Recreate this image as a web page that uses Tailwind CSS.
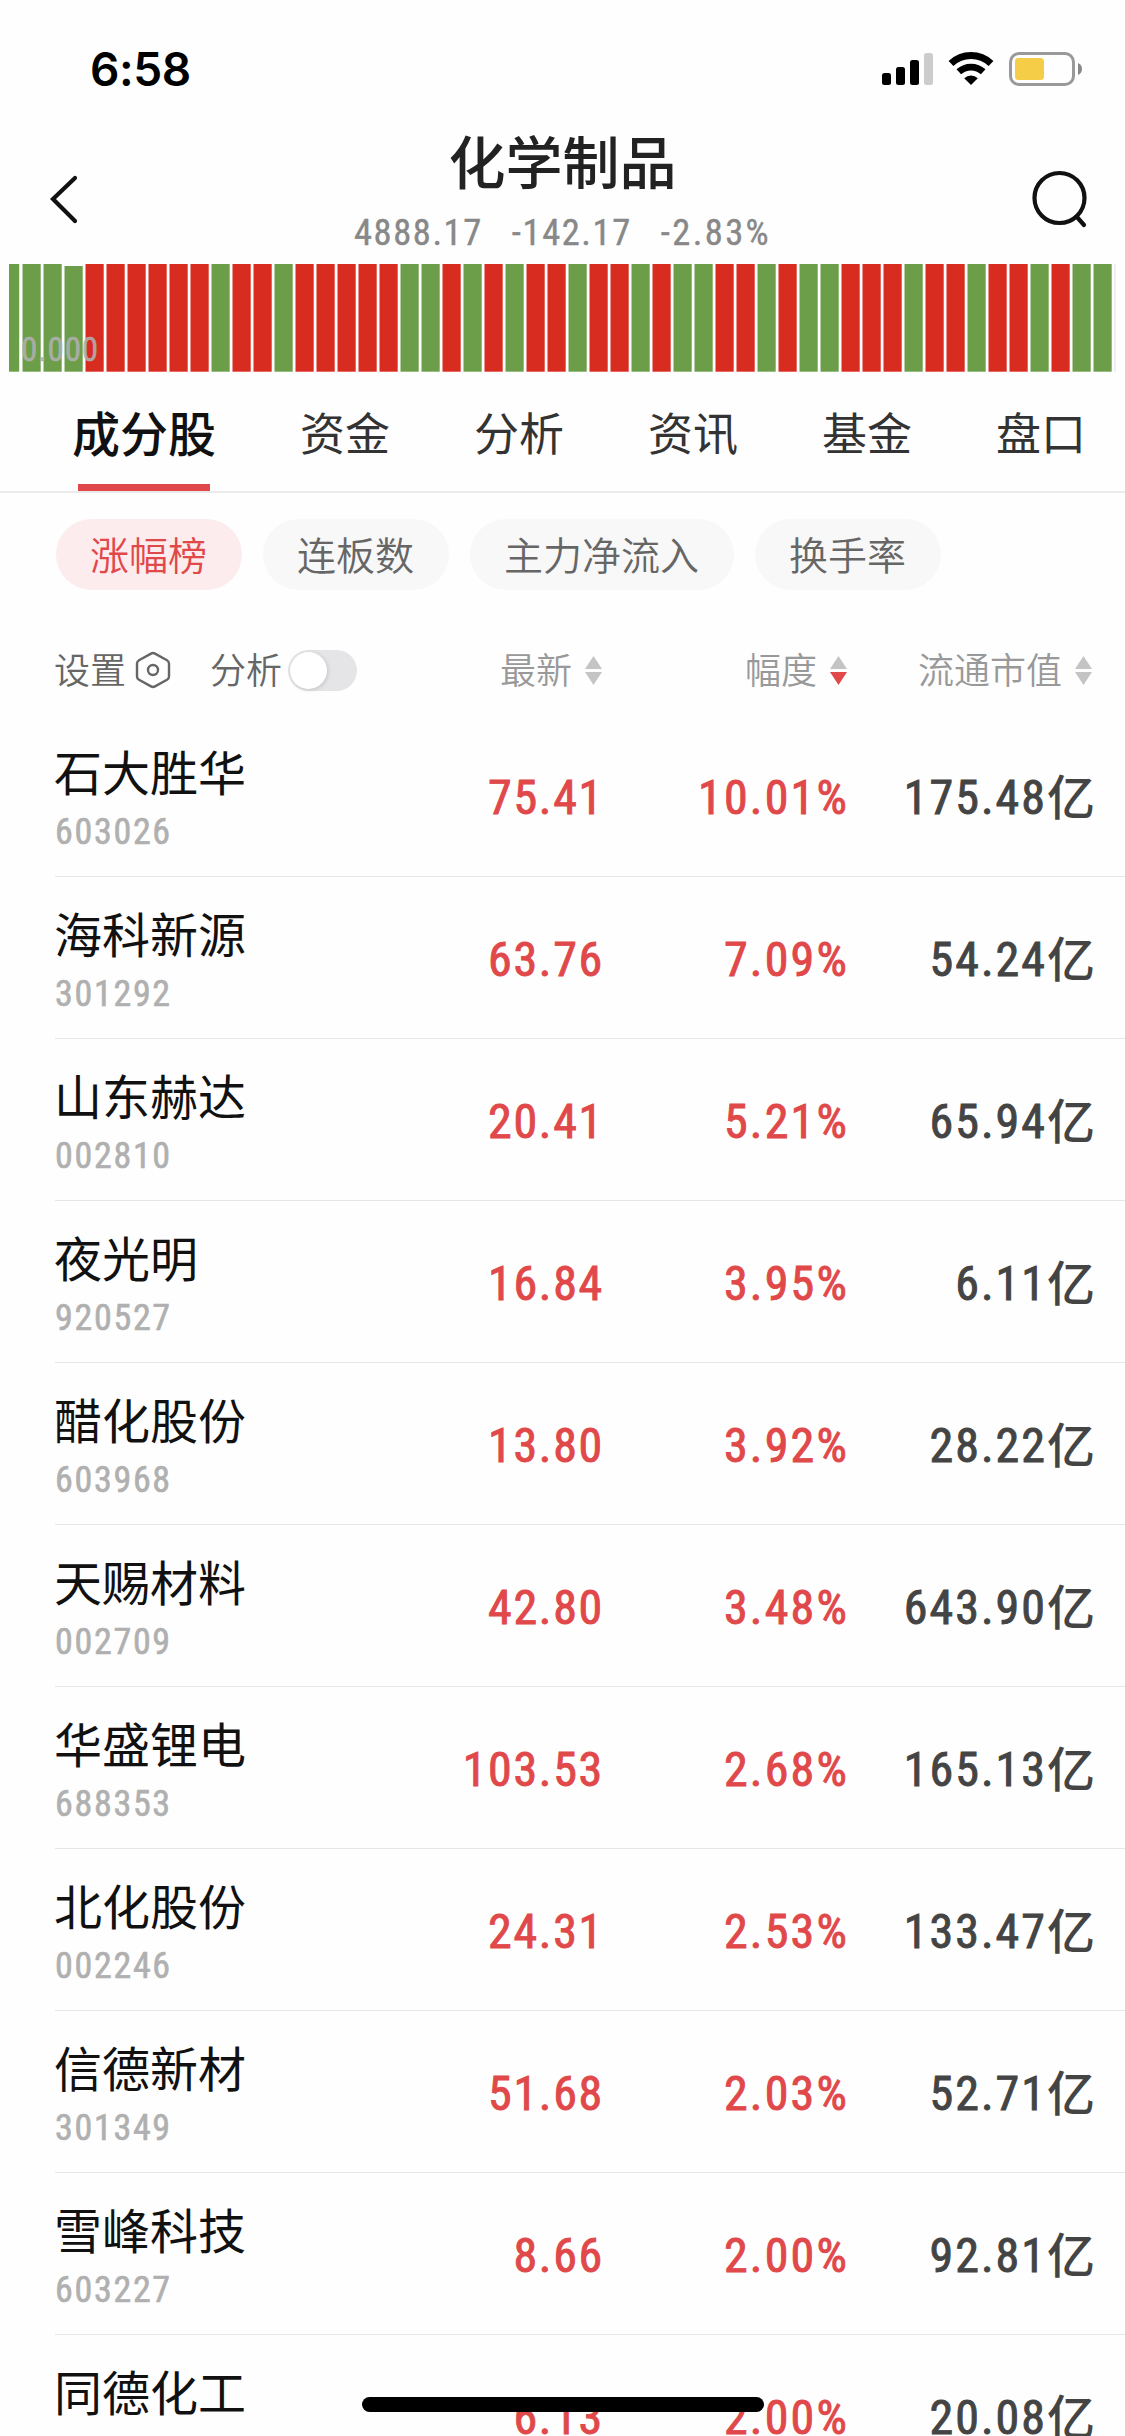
<!DOCTYPE html>
<html lang="zh-CN">
<head>
<meta charset="utf-8">
<title>化学制品</title>
<script src="https://cdn.jsdelivr.net/npm/@tailwindcss/browser@4"></script>
</head>
<body class="bg-white">
<div class="relative flex h-[2436px] w-[1125px] flex-col overflow-hidden bg-[#fefefe] font-['Noto_Sans_CJK_SC',sans-serif] text-[#111]">

  <!-- status bar -->
  <div class="flex h-[132px] shrink-0 items-start justify-between pl-[90px] pr-[42px] pt-[44px]">
    <div class="font-['Inter',sans-serif] text-[46px] leading-[50px] font-semibold tracking-[-0.4px] text-black">6:58</div>
    <svg class="mt-[6px] h-[38px] w-[203px]" viewBox="880 50 203 38">
      <rect x="882" y="73" width="9" height="12" rx="2.5"/>
      <rect x="896" y="67" width="9" height="18" rx="2.5"/>
      <rect x="910" y="60" width="9" height="25" rx="2.5"/>
      <rect x="924" y="53" width="9" height="32" rx="2.5" fill="#ccc"/>
      <path d="M951 63.5A29 29 0 0 1 991 63.5" fill="none" stroke="#000" stroke-width="7"/>
      <path d="M958.8 71.8A18 18 0 0 1 983.2 71.8" fill="none" stroke="#000" stroke-width="6.8"/>
      <path d="M964.2 78.2A10 10 0 0 1 977.800 78.2L971 85Z"/>
      <rect x="1010.500" y="53.500" width="63" height="31" rx="8.500" fill="none" stroke="#999" stroke-width="3"/>
      <rect x="1015" y="58" width="29" height="22" rx="3.500" fill="#f6cd46"/>
      <path d="M1078 63C1080.500 64 1082 66 1082 69S1080.500 74 1078 75Z" fill="#888"/>
    </svg>
  </div>

  <!-- title bar -->
  <div class="flex h-[132px] shrink-0 justify-between pl-[48px] pr-[36px]">
    <svg class="mt-[40px] h-[54px] w-[34px]" viewBox="48 172 34 54" fill="none" stroke="#111" stroke-width="4.200" stroke-linecap="round"><path d="M75 178L53 199L75 221"/></svg>
    <div class="flex flex-col items-center pl-[14px]">
      <h1 class="-mt-[3px] text-[57px] leading-[60px] font-medium text-[#222]">化学制品</h1>
      <div class="mt-[23px] flex gap-[29px] font-['Roboto_Condensed',sans-serif] text-[36.5px] leading-[42px] tracking-[1.6px] text-[#888] [-webkit-text-stroke:0.4px_#888]">
        <span>4888.17</span><span>-142.17</span><span class="tracking-[2.4px]">-2.83%</span>
      </div>
    </div>
    <svg class="mt-[36px] h-[62px] w-[60px]" viewBox="1029 168 60 62" fill="none" stroke="#111" stroke-width="4.200" stroke-linecap="round"><circle cx="1059.500" cy="198" r="25"/><path d="M1076.500 216.500L1084 225"/></svg>
  </div>

  <!-- volume strip -->
  <div class="relative h-[108px] shrink-0 pl-[9px]">
    <svg id="strip" class="h-[108px] w-[1108px]" viewBox="9 264 1108 108"></svg>
    <span class="absolute left-[21px] top-[66px] font-['Roboto_Condensed',sans-serif] text-[33px] leading-[40px] tracking-[0.8px] text-[#b0b0b0]/90 [-webkit-text-stroke:0.5px_#b0b0b0]">0.000</span>
  </div>

  <!-- tabs -->
  <div class="flex h-[121px] shrink-0 items-start gap-[84px] border-b-2 border-[#ebebeb] pl-[72px] text-[45px] leading-[60px] text-[#333]">
    <div class="flex h-[119px] flex-col items-center justify-between pt-[29px]"><span class="text-[48px] font-medium text-[#111]">成分股</span><i class="h-[7px] w-[132px] bg-[#e0484a]"></i></div>
    <span class="pt-[30px]">资金</span><span class="pt-[30px]">分析</span><span class="pt-[30px]">资讯</span><span class="pt-[30px]">基金</span><span class="pt-[30px]">盘口</span>
  </div>

  <!-- ranking filters -->
  <div class="flex shrink-0 gap-[21px] pl-[55.5px] pt-[26px] text-[39px] leading-[68px] font-[350] text-[#666]">
    <span class="rounded-full bg-[#fceced] px-[34.5px] pb-[3px] text-[#e0484a]">涨幅榜</span>
    <span class="rounded-full bg-[#f8f8f8] px-[34.5px] pb-[3px]">连板数</span>
    <span class="rounded-full bg-[#f8f8f8] px-[34.5px] pb-[3px]">主力净流入</span>
    <span class="rounded-full bg-[#f8f8f8] px-[34.5px] pb-[3px]">换手率</span>
  </div>

  <!-- column headings -->
  <div class="grid h-[125px] shrink-0 grid-cols-[304px_244px_245px_245px] items-center pl-[54px] pt-[35px] text-[36px] leading-[37px] font-[350] text-[#999]">
    <div class="flex items-center text-[#666]">
      <span class="pb-[3px]">设置</span>
      <svg class="ml-[9px] h-[38px] w-[36px]" viewBox="0 0 36 38" fill="none" stroke="#666" stroke-width="2.400" stroke-linejoin="round"><path d="M16 2.600Q18 1.500 20 2.600L32 9.200Q34 10.400 34 12.600V25.400Q34 27.600 32 28.800L20 35.400Q18 36.500 16 35.400L4 28.800Q2 27.600 2 25.400V12.600Q2 10.400 4 9.200Z"/><circle cx="18" cy="19" r="5"/></svg>
      <span class="ml-[39px] pb-[3px]">分析</span>
      <span class="ml-[6px] flex h-[41px] w-[69px] items-center rounded-full bg-[#e5e5e7] pl-[2px]"><i class="h-[37px] w-[37px] rounded-full bg-white shadow-[1px_1px_4px_rgba(0,0,0,0.15)]"></i></span>
    </div>
    <div class="flex items-center justify-end gap-[13px]"><span class="pb-[3px]">最新</span><svg class="h-[29px] w-[17px]" viewBox="0 0 17 29" fill="#c4c4c4"><path d="M8.500 0L17 13H0Z"/><path d="M0 16H17L8.500 29Z"/></svg></div>
    <div class="flex items-center justify-end gap-[13px]"><span class="pb-[3px]">幅度</span><svg class="h-[29px] w-[17px]" viewBox="0 0 17 29" fill="#c4c4c4"><path d="M8.500 0L17 13H0Z"/><path d="M0 16H17L8.500 29Z" fill="#e0484a"/></svg></div>
    <div class="flex items-center justify-end gap-[13px]"><span class="pb-[3px]">流通市值</span><svg class="h-[29px] w-[17px]" viewBox="0 0 17 29" fill="#c4c4c4"><path d="M8.500 0L17 13H0Z"/><path d="M0 16H17L8.500 29Z"/></svg></div>
  </div>

  <div id="rows" class="flex flex-col pl-[55px]"></div>

  <!-- home indicator -->
  <div class="absolute left-[362px] top-[2397px] h-[15px] w-[402px] rounded-full bg-black"></div>
</div>
<script>
const colors = 'GGGGRRRRRRGRRGRRRRRGGRGRGRRGRRGRGGRRGRGGRRRGRRGRRGRGG';
document.getElementById('strip').innerHTML = [...colors].map((c, i) => {
  const x = i ? 22.5 + 21 * (i - 1) : 9, w = i ? 18.2 : 10.2, y = i === 3 ? 266 : 264;
  return `<rect x="${x}" y="${y}" width="${w}" height="${371.7 - y}" fill="${c === 'G' ? '#6c9e4a' : '#d92c20'}"/>`;
}).join('') + '<rect x="1114" y="264" width="2" height="108" fill="#eeeef8"/>';

const stocks = [
  ['石大胜华', '603026', '75.41', '10.01%', '175.48'],
  ['海科新源', '301292', '63.76', '7.09%', '54.24'],
  ['山东赫达', '002810', '20.41', '5.21%', '65.94'],
  ['夜光明', '920527', '16.84', '3.95%', '6.11'],
  ['醋化股份', '603968', '13.80', '3.92%', '28.22'],
  ['天赐材料', '002709', '42.80', '3.48%', '643.90'],
  ['华盛锂电', '688353', '103.53', '2.68%', '165.13'],
  ['北化股份', '002246', '24.31', '2.53%', '133.47'],
  ['信德新材', '301349', '51.68', '2.03%', '52.71'],
  ['雪峰科技', '603227', '8.66', '2.00%', '92.81'],
  ['同德化工', '', '6.13', '2.00%', '20.08'],
];
document.getElementById('rows').innerHTML = stocks.map(([name, code, price, pct, cap]) => `
  <div class="grid h-[162px] shrink-0 grid-cols-[305px_244px_245px_246px] border-b border-[#e6e6e6] font-['Roboto_Condensed','Noto_Sans_CJK_SC',sans-serif]">
    <div class="-ml-px flex flex-col pt-[25px]">
      <span class="font-['Noto_Sans_CJK_SC',sans-serif] text-[48px] leading-[60px]">${name}</span>
      <span class="mt-[10px] pl-px text-[36px] leading-[44px] tracking-[1.7px] text-[#b0b0b0] [-webkit-text-stroke:0.6px_#b0b0b0]">${code}</span>
    </div>
    <span class="pt-[53px] text-right text-[48px] leading-[60px] tracking-[1.7px] text-[#e0484a] [-webkit-text-stroke:0.9px_#e0484a]">${price}</span>
    <span class="pt-[53px] text-right text-[48px] leading-[60px] tracking-[2.2px] text-[#e0484a] [-webkit-text-stroke:0.9px_#e0484a]">${pct}</span>
    <span class="flex justify-end text-[48px] leading-[60px] text-[#444]"><span class="pt-[53px] tracking-[2px] [-webkit-text-stroke:0.9px_#444]">${cap}</span><span class="pt-[49px] font-['Noto_Sans_CJK_SC',sans-serif] font-medium">亿</span></span>
  </div>`).join('');
</script>
</body>
</html>
